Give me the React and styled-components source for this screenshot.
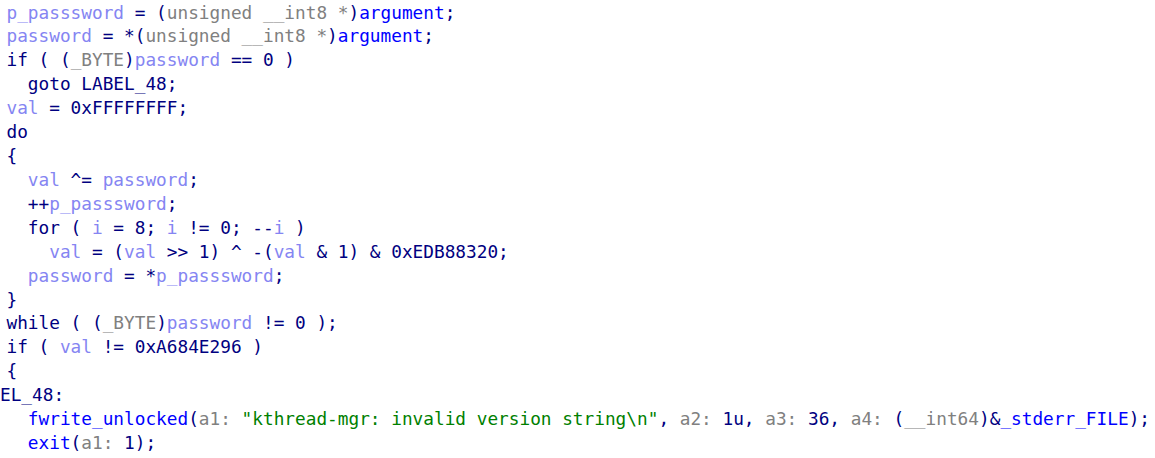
import React from "react";
import styled, { createGlobalStyle, css } from "styled-components";

const Global = createGlobalStyle`
  html, body { margin: 0; padding: 0; background: #ffffff; }
  body { overflow: hidden; }
`;

const CodeView = styled.div`
  width: 1155px;
  height: 458px;
  overflow: hidden;
  background: #ffffff;
  padding: 1.5px 0 0 6.5px;
  box-sizing: border-box;
  font-family: "DejaVu Sans Mono", "Liberation Mono", monospace;
  font-size: 17.75px;
  line-height: 23.93px;
  color: #000080;
  white-space: pre;
`;

const Line = styled.div`
  height: 23.93px;
  padding-left: ${(p) => p.$indent || 0}ch;
  ${(p) =>
    p.$label &&
    css`
      margin-left: -6.5px;
    `}
`;

const colors = {
  kw: "#000080",
  local: "#8585F2",
  glob: "#0000FF",
  type: "#808080",
  hint: "#808080",
  str: "#008000",
};

const Tok = styled.span`
  color: ${(p) => colors[p.$k] || "#000080"};
`;

const T = ({ k, children }) => <Tok $k={k}>{children}</Tok>;

export default function App() {
  return (
    <>
      <Global />
      <CodeView>
        <Line>
          <T k="local">p_passsword</T> = (<T k="type">unsigned __int8 *</T>)<T k="glob">argument</T>;
        </Line>
        <Line>
          <T k="local">password</T> = *(<T k="type">unsigned __int8 *</T>)<T k="glob">argument</T>;
        </Line>
        <Line>
          if ( (<T k="type">_BYTE</T>)<T k="local">password</T> == 0 )
        </Line>
        <Line $indent={2}>goto LABEL_48;</Line>
        <Line>
          <T k="local">val</T> = 0xFFFFFFFF;
        </Line>
        <Line>do</Line>
        <Line>{"{"}</Line>
        <Line $indent={2}>
          <T k="local">val</T> ^= <T k="local">password</T>;
        </Line>
        <Line $indent={2}>
          ++<T k="local">p_passsword</T>;
        </Line>
        <Line $indent={2}>
          for ( <T k="local">i</T> = 8; <T k="local">i</T> != 0; --<T k="local">i</T> )
        </Line>
        <Line $indent={4}>
          <T k="local">val</T> = (<T k="local">val</T> &gt;&gt; 1) ^ -(<T k="local">val</T> &amp; 1) &amp; 0xEDB88320;
        </Line>
        <Line $indent={2}>
          <T k="local">password</T> = *<T k="local">p_passsword</T>;
        </Line>
        <Line>{"}"}</Line>
        <Line>
          while ( (<T k="type">_BYTE</T>)<T k="local">password</T> != 0 );
        </Line>
        <Line>
          if ( <T k="local">val</T> != 0xA684E296 )
        </Line>
        <Line>{"{"}</Line>
        <Line $label>EL_48:</Line>
        <Line $indent={2}>
          <T k="glob">fwrite_unlocked</T>(<T k="hint">a1: </T>
          <T k="str">"kthread-mgr: invalid version string\n"</T>, <T k="hint">a2: </T>1u, <T k="hint">a3: </T>36,{" "}
          <T k="hint">a4: </T>(<T k="type">__int64</T>)&amp;<T k="glob">_stderr_FILE</T>);
        </Line>
        <Line $indent={2}>
          <T k="glob">exit</T>(<T k="hint">a1: </T>1);
        </Line>
      </CodeView>
    </>
  );
}
